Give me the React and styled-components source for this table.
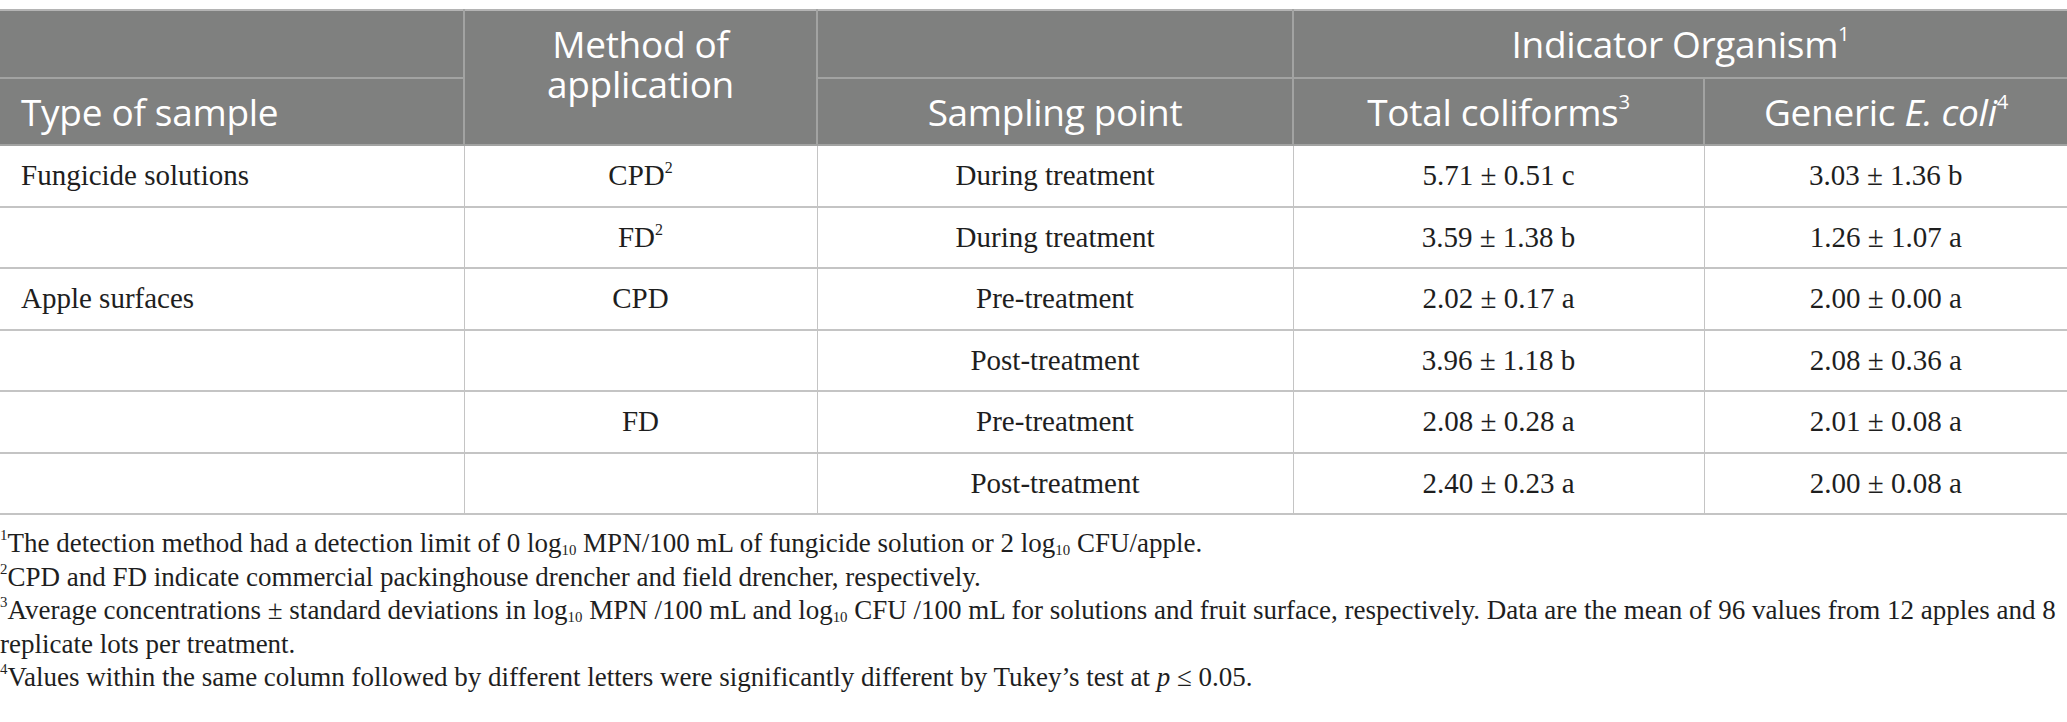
import * as React from 'react';
import styled, { createGlobalStyle } from 'styled-components';

const GlobalStyle = createGlobalStyle`
  html, body {
    margin: 0;
    padding: 0;
    background: #ffffff;
  }
`;

const Page = styled.div`
  width: 2067px;
  padding-top: 9px;
  box-sizing: border-box;
`;

const Table = styled.table`
  width: 2067px;
  border-collapse: collapse;
  table-layout: fixed;
  border-top: 2px solid #b4b4b4;
  border-bottom: 2px solid #b8b8b8;
`;

const HeadRow = styled.tr`
  height: ${(p) => p.h}px;
`;

const HeadCell = styled.th`
  background: #7f807f;
  color: #ffffff;
  font-family: 'Open Sans', 'Lato', sans-serif;
  font-weight: 400;
  font-size: 37px;
  line-height: 40px;
  letter-spacing: -0.3px;
  text-align: ${(p) => (p.left ? 'left' : 'center')};
  vertical-align: ${(p) => (p.top ? 'top' : 'middle')};
  padding: ${(p) => (p.top ? '13px' : '0')} 0 0 ${(p) => (p.left ? '21px' : '0')};
  border: 2px solid #a2a3a2;
  border-top: none;
  &:first-child { border-left: none; }
  &:last-child { border-right: none; }

  sup {
    font-size: 0.55em;
    line-height: 0;
    vertical-align: 0.85em;
  }
`;

const BodyRow = styled.tr`
  height: 61.5px;
`;

const Cell = styled.td`
  font-family: 'Liberation Serif', 'Times New Roman', serif;
  font-size: 29px;
  color: #1e1e1e;
  text-align: ${(p) => (p.left ? 'left' : 'center')};
  padding: 0 0 0 ${(p) => (p.left ? '21px' : '0')};
  vertical-align: middle;
  border: 2px solid #c4c4c4;
  border-left-width: 1px;
  border-right-width: 1px;
  &:first-child { border-left: none; }
  &:last-child { border-right: none; }

  sup {
    font-size: 0.55em;
    line-height: 0;
    vertical-align: 0.75em;
  }
`;

const Notes = styled.div`
  padding-top: 12px;
  font-family: 'Liberation Serif', 'Times New Roman', serif;
  font-size: 27px;
  line-height: 33.5px;
  color: #1e1e1e;

  sup, sub {
    font-size: 0.55em;
    line-height: 0;
  }
  sup { vertical-align: 0.8em; }
  sub { vertical-align: -0.2em; }
`;

const Note = styled.p`
  margin: 0;
`;

const rows = [
  { type: 'Fungicide solutions', method: <>CPD<sup>2</sup></>, point: 'During treatment', tc: '5.71 ± 0.51 c', ec: '3.03 ± 1.36 b' },
  { type: '', method: <>FD<sup>2</sup></>, point: 'During treatment', tc: '3.59 ± 1.38 b', ec: '1.26 ± 1.07 a' },
  { type: 'Apple surfaces', method: 'CPD', point: 'Pre-treatment', tc: '2.02 ± 0.17 a', ec: '2.00 ± 0.00 a' },
  { type: '', method: '', point: 'Post-treatment', tc: '3.96 ± 1.18 b', ec: '2.08 ± 0.36 a' },
  { type: '', method: 'FD', point: 'Pre-treatment', tc: '2.08 ± 0.28 a', ec: '2.01 ± 0.08 a' },
  { type: '', method: '', point: 'Post-treatment', tc: '2.40 ± 0.23 a', ec: '2.00 ± 0.08 a' },
];

export default function App() {
  return (
    <Page>
      <GlobalStyle />
      <Table>
        <colgroup>
          <col style={{ width: 464 }} />
          <col style={{ width: 353 }} />
          <col style={{ width: 476 }} />
          <col style={{ width: 411 }} />
          <col style={{ width: 363 }} />
        </colgroup>
        <thead>
          <HeadRow h={68}>
            <HeadCell />
            <HeadCell rowSpan={2} top>
              Method of
              <br />
              application
            </HeadCell>
            <HeadCell />
            <HeadCell colSpan={2}>
              Indicator Organism<sup>1</sup>
            </HeadCell>
          </HeadRow>
          <HeadRow h={67}>
            <HeadCell left>Type of sample</HeadCell>
            <HeadCell>Sampling point</HeadCell>
            <HeadCell>
              Total coliforms<sup>3</sup>
            </HeadCell>
            <HeadCell>
              Generic <i>E. coli</i>
              <sup>4</sup>
            </HeadCell>
          </HeadRow>
        </thead>
        <tbody>
          {rows.map((r, i) => (
            <BodyRow key={i}>
              <Cell left>{r.type}</Cell>
              <Cell>{r.method}</Cell>
              <Cell>{r.point}</Cell>
              <Cell>{r.tc}</Cell>
              <Cell>{r.ec}</Cell>
            </BodyRow>
          ))}
        </tbody>
      </Table>
      <Notes>
        <Note>
          <sup>1</sup>The detection method had a detection limit of 0 log<sub>10</sub> MPN/100 mL of fungicide
          solution or 2 log<sub>10</sub> CFU/apple.
        </Note>
        <Note>
          <sup>2</sup>CPD and FD indicate commercial packinghouse drencher and field drencher, respectively.
        </Note>
        <Note>
          <sup>3</sup>Average concentrations ± standard deviations in log<sub>10</sub> MPN /100 mL and log
          <sub>10</sub> CFU /100 mL for solutions and fruit surface, respectively. Data are the mean of 96 values
          from 12 apples and 8 replicate lots per treatment.
        </Note>
        <Note>
          <sup>4</sup>Values within the same column followed by different letters were significantly different by
          Tukey’s test at <i>p</i> ≤ 0.05.
        </Note>
      </Notes>
    </Page>
  );
}
